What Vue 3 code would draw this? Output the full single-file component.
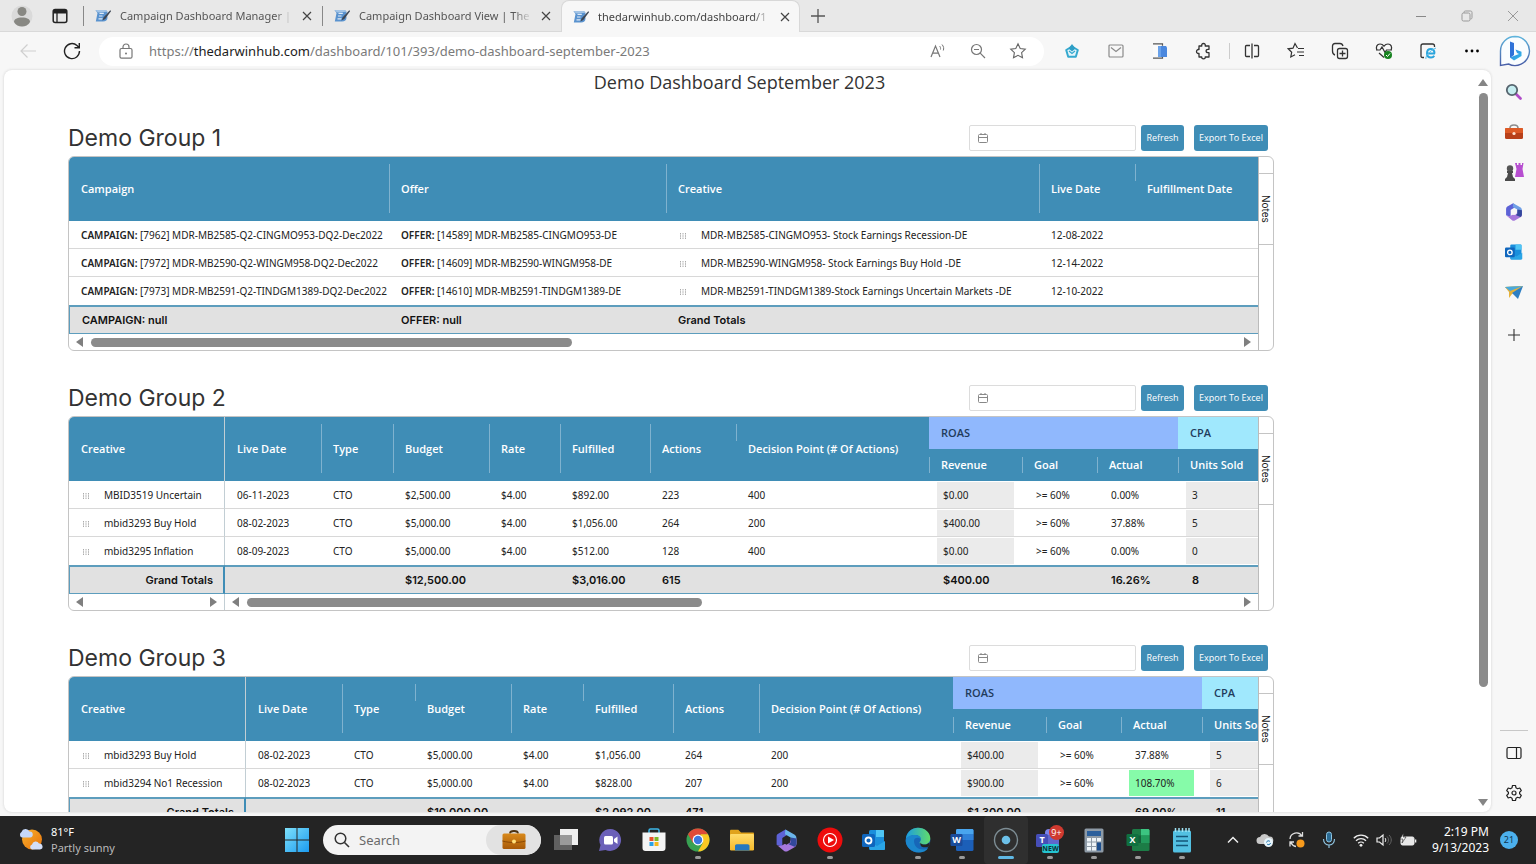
<script setup>
const tabs = [
  { title: 'Campaign Dashboard Manager |', active: false },
  { title: 'Campaign Dashboard View | The', active: false },
  { title: 'thedarwinhub.com/dashboard/1', active: true },
]

const text = (label, width, extra = {}) => ({ label, width, ...extra })

const metricLeaves = [
  text('Revenue', 93, { metric: true, shaded: true }),
  text('Goal', 75, { metric: true }),
  text('Actual', 81, { metric: true }),
  text('Units Sold', null, { metric: true, shaded: true }),
]

const groups = [
  {
    name: 'Demo Group 1',
    pinned: 0,
    thumb: 'thumb-a',
    columns: [
      text('Campaign', 320, { tag: 'CAMPAIGN:' }),
      text('Offer', 277, { tag: 'OFFER:' }),
      text('Creative', 373, { handle: true }),
      text('Live Date', 96),
      text('Fulfillment Date', null, { short: true }),
    ],
    leaves: [],
    rows: [
      ['[7962] MDR-MB2585-Q2-CINGMO953-DQ2-Dec2022', '[14589] MDR-MB2585-CINGMO953-DE', 'MDR-MB2585-CINGMO953- Stock Earnings Recession-DE', '12-08-2022', ''],
      ['[7972] MDR-MB2590-Q2-WINGM958-DQ2-Dec2022', '[14609] MDR-MB2590-WINGM958-DE', 'MDR-MB2590-WINGM958- Stock Earnings Buy Hold -DE', '12-14-2022', ''],
      ['[7973] MDR-MB2591-Q2-TINDGM1389-DQ2-Dec2022', '[14610] MDR-MB2591-TINDGM1389-DE', 'MDR-MB2591-TINDGM1389-Stock Earnings Uncertain Markets -DE', '12-10-2022', ''],
    ],
    totals: ['CAMPAIGN: null', 'OFFER: null', 'Grand Totals', '', ''],
  },
  {
    name: 'Demo Group 2',
    pinned: 156,
    thumb: 'thumb-b',
    columns: [
      text('Creative', 156, { handle: true, pin: true }),
      text('Live Date', 96),
      text('Type', 72),
      text('Budget', 96),
      text('Rate', 71),
      text('Fulfilled', 90),
      text('Actions', 86),
      text('Decision Point (# Of Actions)', 193, { short: true }),
    ],
    leaves: metricLeaves,
    rows: [
      ['MBID3519 Uncertain', '06-11-2023', 'CTO', '$2,500.00', '$4.00', '$892.00', '223', '400', '$0.00', '>= 60%', '0.00%', '3'],
      ['mbid3293 Buy Hold', '08-02-2023', 'CTO', '$5,000.00', '$4.00', '$1,056.00', '264', '200', '$400.00', '>= 60%', '37.88%', '5'],
      ['mbid3295 Inflation', '08-09-2023', 'CTO', '$5,000.00', '$4.00', '$512.00', '128', '400', '$0.00', '>= 60%', '0.00%', '0'],
    ],
    totals: ['Grand Totals', '', '', '$12,500.00', '', '$3,016.00', '615', '', '$400.00', '', '16.26%', '8'],
  },
  {
    name: 'Demo Group 3',
    pinned: 177,
    thumb: 'thumb-b',
    columns: [
      text('Creative', 177, { handle: true, pin: true }),
      text('Live Date', 96),
      text('Type', 73),
      text('Budget', 96, { short: true }),
      text('Rate', 72),
      text('Fulfilled', 90, { short: true }),
      text('Actions', 86),
      text('Decision Point (# Of Actions)', 194),
    ],
    leaves: metricLeaves,
    rows: [
      ['mbid3293 Buy Hold', '08-02-2023', 'CTO', '$5,000.00', '$4.00', '$1,056.00', '264', '200', '$400.00', '>= 60%', '37.88%', '5'],
      ['mbid3294 No1 Recession', '08-02-2023', 'CTO', '$5,000.00', '$4.00', '$828.00', '207', '200', '$900.00', '>= 60%', '108.70%', '6'],
    ],
    totals: ['Grand Totals', '', '', '$10,000.00', '', '$2,092.00', '471', '', '$1,300.00', '', '69.00%', '11'],
  },
]

const allColumns = (g) => [...g.columns, ...g.leaves]
const isHit = (value) => value === '108.70%'
</script>

<template>
  <div class="screen">
    <svg class="defs" width="0" height="0" aria-hidden="true">
      <defs>
        <linearGradient id="gBing" x1="0" y1="0" x2="1" y2="1"><stop offset="0" stop-color="#2f7fe0" /><stop offset="1" stop-color="#35c0e8" /></linearGradient>
        <linearGradient id="gRing" x1="0" y1="0" x2="0" y2="1"><stop offset="0" stop-color="#5fb4dc" /><stop offset="1" stop-color="#4a5fa8" /></linearGradient>
        <linearGradient id="gWin" x1="0" y1="0" x2="1" y2="1"><stop offset="0" stop-color="#7ee0fa" /><stop offset="1" stop-color="#1b9bf0" /></linearGradient>
        <linearGradient id="gSun" x1="0" y1="0" x2="1" y2="1"><stop offset="0" stop-color="#f7b02c" /><stop offset="1" stop-color="#e8720c" /></linearGradient>
        <linearGradient id="gCase" x1="0" y1="0" x2="0" y2="1"><stop offset="0" stop-color="#d98a1c" /><stop offset="1" stop-color="#a85a08" /></linearGradient>
        <linearGradient id="gEdge" x1="0" y1="0" x2="1" y2="0"><stop offset="0" stop-color="#1b9ce0" /><stop offset="1" stop-color="#62dc6a" /></linearGradient>
        <linearGradient id="gFold" x1="0" y1="0" x2="0" y2="1"><stop offset="0" stop-color="#ffdc6b" /><stop offset="1" stop-color="#f5b92a" /></linearGradient>
        <symbol id="fav" viewBox="0 0 16 16">
          <path d="M.5 2h9c2 0 3 1 3 2.500 0 1.200-.6 2-1.500 2.600 1 .5 1.500 1.300 1.500 2.400 0 2.500-1.700 4-4.500 4H.8L2.500 5z" fill="#5a93cf" /><path d="M.5 2h9c1.500 0 2.500.6 2.900 1.700L3 4.500z" fill="#a3c4e6" /><path d="M4.500 5.300h4.300M4 8h3.500M3.500 10.800h4" stroke="#dfeaf6" stroke-width="1.200" /><path d="M15.500 2l-7 7.500-1.200 3 3-1.500L15.800 3.500z" fill="#3d4654" />
        </symbol>
        <symbol id="m365" viewBox="0 0 24 24">
          <path d="M11 1.500L4 5.500c-1 .6-1.500 1.400-1.500 2.500v8l5.500 2V9.500l7-4.500z" fill="#5d62d6" /><path d="M11 1.500l8.500 4.700c1.300.8 2 1.800 2 3.300v6L16 14V9l-5.500-3z" fill="#6bb5ea" /><path d="M21.500 10v5.500c0 1.300-.7 2.200-1.800 2.900L13 22.300c-1 .4-2 .4-3 0L2.500 16c2 1.500 4 1.300 5.500.5l8-4.500z" fill="#a678dc" /><path d="M16 9l5.500 1v5c0 1.300-.7 2.400-1.800 3L14 15.500 16 14z" fill="#33489c" /><path d="M12 8l3.500 2v4L12 16l-3.500-2v-4z" fill="#242424" />
        </symbol>
        <symbol id="m365light" viewBox="0 0 24 24">
          <path d="M11 1.500L4 5.500c-1 .6-1.500 1.400-1.500 2.500v8l5.500 2V9.500l7-4.500z" fill="#5d62d6" /><path d="M11 1.500l8.500 4.700c1.300.8 2 1.800 2 3.300v6L16 14V9l-5.500-3z" fill="#6f9fe6" /><path d="M21.500 10v5.500c0 1.300-.7 2.200-1.800 2.900L13 22.300c-1 .4-2 .4-3 0L2.500 16c2 1.500 4 1.300 5.500.5l8-4.500z" fill="#a678dc" /><path d="M16 9l5.500 1v5c0 1.300-.7 2.400-1.800 3L14 15.500 16 14z" fill="#33489c" /><circle cx="12" cy="12" r="3.600" fill="#f7f7f7" />
        </symbol>
        <symbol id="outlook" viewBox="0 0 24 24">
          <rect x="7" y="2" width="15" height="20" rx="1.500" fill="#1a8fdc" /><path d="M14 2h7c.6 0 1 .4 1 1v6h-8z" fill="#4fc6f5" /><path d="M7 13l8 5 8-5v8c0 .6-.4 1-1 1H8z" fill="#2aa5e6" /><rect x="0" y="6" width="13" height="13" rx="1.500" fill="#0f66bd" /><circle cx="6.500" cy="12.500" r="3" fill="none" stroke="#fff" stroke-width="1.800" />
        </symbol>
      </defs>
    </svg>

    <header class="tabstrip">
      <button class="plain profile" aria-label="Profile">
        <svg width="22" height="22" viewBox="0 0 22 22"><circle cx="11" cy="11" r="10.500" fill="#dadada" /><circle cx="11" cy="6.500" r="4.500" fill="#888883" /><path d="M3 17c0-3 3-4.500 8-4.500s8 1.500 8 4.500c-1.500 3-5 4.500-8 4.500S4.500 20 3 17z" fill="#888883" /></svg>
      </button>
      <button class="plain workspaces" aria-label="Tab actions">
        <svg width="16" height="16" viewBox="0 0 16 16"><rect x="1.200" y="1.500" width="13.600" height="13" rx="2" fill="none" stroke="#222" stroke-width="1.500" /><path d="M1.500 2h13v3.500h-13z" fill="#222" /><path d="M5 5v9" stroke="#222" stroke-width="1.300" /></svg>
      </button>
      <nav class="tabs" aria-label="Tabs">
        <div v-for="t in tabs" :key="t.title" class="tab" :class="{ active: t.active }">
          <svg class="fav" width="16" height="16"><use href="#fav" /></svg>
          <a class="tab-title" href="#">{{ t.title }}</a>
          <button class="plain close" aria-label="Close tab"><svg width="10" height="10" viewBox="0 0 10 10"><path d="M1 1l8 8M9 1L1 9" stroke="#444" stroke-width="1.200" /></svg></button>
        </div>
      </nav>
      <button class="plain newtab" aria-label="New tab"><svg width="14" height="14" viewBox="0 0 14 14"><path d="M7 0v14M0 7h14" stroke="#555" stroke-width="1.300" /></svg></button>
      <div class="winctl">
        <button class="plain" aria-label="Minimize"><svg width="12" height="12" viewBox="0 0 12 12"><path d="M1 6.500h10" stroke="#888" /></svg></button>
        <button class="plain" aria-label="Restore"><svg width="12" height="12" viewBox="0 0 12 12"><rect x="1" y="3" width="8" height="8" rx="1.500" fill="none" stroke="#999" /><path d="M3 3V2.500C3 1.500 3.500 1 4.500 1h5C10.500 1 11 1.500 11 2.500v5c0 1-.5 1.500-1.500 1.500" fill="none" stroke="#999" /></svg></button>
        <button class="plain" aria-label="Close"><svg width="12" height="12" viewBox="0 0 12 12"><path d="M1 1l10 10M11 1L1 11" stroke="#999" /></svg></button>
      </div>
    </header>

    <div class="toolbar">
      <button class="plain slot" aria-label="Back"><svg width="18" height="18" viewBox="0 0 18 18"><path d="M17 9H2M8.500 2.500L2 9l6.500 6.500" fill="none" stroke="#cfcfcf" stroke-width="1.200" /></svg></button>
      <button class="plain slot" aria-label="Refresh page"><svg width="18" height="18" viewBox="0 0 18 18"><path d="M16.500 9A7.500 7.500 0 1 1 14 3.500L16 5.500M16.300 1v4.800h-4.800" fill="none" stroke="#222" stroke-width="1.400" /></svg></button>
      <div class="address">
        <svg width="14" height="16" viewBox="0 0 14 16"><rect x="1" y="5.500" width="12" height="9.700" rx="1.500" fill="none" stroke="#777" stroke-width="1.200" /><path d="M4 5.500V4a3 3 0 0 1 6 0v1.500" fill="none" stroke="#777" stroke-width="1.200" /><circle cx="7" cy="10.500" r="1" fill="#777" /></svg>
        <a class="url" href="#">https://<b>thedarwinhub.com</b>/dashboard/101/393/demo-dashboard-september-2023</a>
        <button class="plain act" aria-label="Read aloud"><svg width="16" height="16" viewBox="0 0 16 16"><path d="M1 14L5.500 3 10 14M2.700 10.200h5.600" fill="none" stroke="#777" stroke-width="1.200" /><path d="M9.500 3c1 1 1.200 2 1 3.500M12 1.500c1.800 2 2 4 1.300 6" fill="none" stroke="#777" /></svg></button>
        <button class="plain act" aria-label="Zoom out"><svg width="16" height="16" viewBox="0 0 16 16"><circle cx="6.500" cy="6.500" r="5" fill="none" stroke="#777" stroke-width="1.200" /><path d="M4 6.500h5M10.200 10.200L15 15" stroke="#777" stroke-width="1.200" /></svg></button>
        <button class="plain act" aria-label="Add to favorites"><svg width="18" height="18" viewBox="0 0 18 18"><path d="M9 1.800l2.200 4.700 5.100.7-3.700 3.500.9 5.100L9 13.300l-4.500 2.500.9-5.100L1.700 7.200l5.100-.7z" fill="none" stroke="#666" stroke-width="1.100" /></svg></button>
      </div>
      <div class="ext">
        <button class="plain slot" aria-label="Extension"><svg width="16" height="16" viewBox="0 0 16 16"><path d="M8 3.500l5.800 3.500-2 6.800H4.200l-2-6.800z" fill="#e6f5fa" stroke="#35a9cf" stroke-width="2" stroke-linejoin="round" /><path d="M4.500 5.500L8 1l3.500 4.500L8 8.500z" fill="#2f9fc6" /><path d="M5 8l3 2.500L11 8" fill="none" stroke="#35a9cf" stroke-width="1.300" /></svg></button>
        <button class="plain slot" aria-label="Mail"><svg width="16" height="16" viewBox="0 0 16 16"><rect x="1" y="2" width="14" height="12" rx="1" fill="none" stroke="#8a8a8a" stroke-width="1.200" /><path d="M3 4.500l5 4 5-4" fill="none" stroke="#8a8a8a" stroke-width="1.200" /></svg></button>
        <button class="plain slot" aria-label="Office"><svg width="16" height="16" viewBox="0 0 16 16"><path d="M1 .5h9v15H1z" fill="#fafafa" /><path d="M1 .8h9.500v2M1 15.200h9.500v-2" fill="none" stroke="#555" stroke-width="1.200" /><path d="M6 3h8l1 1.500V14H6z" fill="#4b88de" /><path d="M6 3h3v11H6z" fill="#6aa2ea" /></svg></button>
        <button class="plain slot" aria-label="Extensions"><svg width="18" height="18" viewBox="0 0 18 18"><path d="M4 4h2.800c-.4-1.500.4-2.500 1.700-2.500s2.100 1 1.700 2.500H14v3.300h-.9c-1.300 0-2 .7-2 1.700s.7 1.700 2 1.700h.9V15h-3.800c.4 1-.4 1.800-1.700 1.800S6.400 16 6.800 15H4v-3.600c-1.500.4-2.500-.6-2.500-1.900s1-2.300 2.500-1.900z" fill="none" stroke="#333" stroke-width="1.300" stroke-linejoin="round" /></svg></button>
        <span class="sep"></span>
        <button class="plain slot first" aria-label="Split screen"><svg width="16" height="16" viewBox="0 0 16 16"><path d="M6 2.500H2.500a1 1 0 0 0-1 1v9a1 1 0 0 0 1 1H6M10 2.500h3.500a1 1 0 0 1 1 1v9a1 1 0 0 1-1 1H10M8 0.500v15" fill="none" stroke="#333" stroke-width="1.300" /></svg></button>
        <button class="plain slot" aria-label="Favorites"><svg width="18" height="18" viewBox="0 0 18 18"><path d="M10.500 6L8 1.500 6 6.200l-4.800.6 3.500 3.400L3.800 15 8 12.800M11 6.500h6M10 10h7M12 13.500h5" fill="none" stroke="#333" stroke-width="1.200" /></svg></button>
        <button class="plain slot" aria-label="Collections"><svg width="18" height="18" viewBox="0 0 18 18"><rect x="6.500" y="6.500" width="10" height="10" rx="2" fill="none" stroke="#333" stroke-width="1.300" /><path d="M11.500 8.500v6M8.500 11.500h6M4 13C2 12.500 1.500 11 1.500 9V4c0-1.500 1-2.500 2.500-2.500h5c1.500 0 2.500.7 3 2.500" fill="none" stroke="#333" stroke-width="1.300" /></svg></button>
        <button class="plain slot" aria-label="Browser essentials"><svg width="18" height="18" viewBox="0 0 18 18"><path d="M2 8C.5 5 2 2 5 2c1.800 0 3 .8 4 2.200C10 2.800 11.200 2 13 2c3 0 4.500 3 3 6M4 11l5 4.500M1 8h4l2-3 3 5.500L11.500 8H17" fill="none" stroke="#333" stroke-width="1.200" /><circle cx="13" cy="13" r="4" fill="#17821f" /><path d="M11 13l1.500 1.500 2.500-3" fill="none" stroke="#fff" /></svg></button>
        <button class="plain slot" aria-label="Internet Explorer mode"><svg width="18" height="18" viewBox="0 0 18 18"><path d="M5 15.500H3.500c-1 0-1.500-.5-1.500-1.500V4c0-1.200.8-2 2-2h9.500c1.200 0 2 .8 2 2v1" fill="none" stroke="#333" stroke-width="1.300" /><path d="M16 11.500H8.500M15.500 11.500c0-3-1.500-4.500-3.700-4.500S8 8.700 8 11.300s1.500 4.200 4 4.200c1.500 0 2.500-.5 3.200-1.800" fill="none" stroke="#2aa4dc" stroke-width="2" /><path d="M7 17c-1-2 3-8 10-11" fill="none" stroke="#5bc0ea" /></svg></button>
        <button class="plain slot" aria-label="Settings and more"><svg width="16" height="16" viewBox="0 0 16 16"><circle cx="2.500" cy="8" r="1.400" /><circle cx="8" cy="8" r="1.400" /><circle cx="13.500" cy="8" r="1.400" /></svg></button>
        <button class="plain bing" aria-label="Bing chat"><svg width="32" height="32" viewBox="0 0 32 32"><path d="M16 1.500A14.500 14.500 0 1 1 9.500 29L1.500 30.500V16A14.500 14.500 0 0 1 16 1.500z" fill="#fafdff" stroke="url(#gRing)" stroke-width="1.400" /><path d="M11 6.500l4 1.500v12l-4 3z" fill="#2f72d8" /><path d="M11 22.500l4 3 7.500-4.500v-4.300l-6-2.200 1.500 3.500 2 1z" fill="url(#gBing)" /></svg></button>
      </div>
    </div>

    <div class="middle">
      <main class="page">
        <div class="content">
          <h1>Demo Dashboard September 2023</h1>
          <section v-for="g in groups" :key="g.name" class="group">
            <div class="group-head">
              <h2>{{ g.name }}</h2>
              <div class="date">
                <svg width="10" height="10" viewBox="0 0 10 10"><rect x="0.500" y="1.500" width="9" height="8" rx="1" fill="none" stroke="#888" /><path d="M.5 4.500h9M3 0v2M7 0v2" stroke="#888" /></svg>
                <input type="text" :aria-label="g.name + ' date range'" />
              </div>
              <button class="btn">Refresh</button>
              <button class="btn export">Export To Excel</button>
            </div>
            <div class="grid">
              <div class="grid-main">
                <table>
                  <colgroup>
                    <col v-for="c in allColumns(g)" :key="c.label" :style="c.width ? { width: c.width + 'px' } : {}" />
                  </colgroup>
                  <thead>
                    <tr :class="g.leaves.length ? 'half' : 'full'">
                      <th v-for="(c, i) in g.columns" :key="c.label" :rowspan="g.leaves.length ? 2 : 1" :class="{ short: c.short, pin: c.pin, line: i > 0 && !(g.pinned && i === 1) }">{{ c.label }}</th>
                      <template v-if="g.leaves.length">
                        <th colspan="3" class="roas">ROAS</th>
                        <th class="cpa">CPA</th>
                      </template>
                    </tr>
                    <tr v-if="g.leaves.length" class="half">
                      <th v-for="c in g.leaves" :key="c.label" class="leaf line">{{ c.label }}</th>
                    </tr>
                  </thead>
                  <tbody>
                    <tr v-for="(r, ri) in g.rows" :key="ri">
                      <td v-for="(c, i) in allColumns(g)" :key="c.label" :class="{ pin: c.pin, metric: c.metric }">
                        <span v-if="c.metric" class="box" :class="{ shaded: c.shaded, hit: isHit(r[i]) }">{{ r[i] }}</span>
                        <template v-else>
                          <svg v-if="c.handle" class="handle" width="8" height="6" viewBox="0 0 8 6"><path d="M1.500 0v6M4 0v6M6.500 0v6" stroke="#aaa" stroke-dasharray="1.500 .75" /></svg>
                          <b v-if="c.tag">{{ c.tag }}&nbsp;</b>{{ r[i] }}
                        </template>
                      </td>
                    </tr>
                  </tbody>
                  <tfoot>
                    <tr>
                      <td v-for="(c, i) in allColumns(g)" :key="c.label" :class="{ pin: c.pin, metric: c.metric }">{{ g.totals[i] }}</td>
                    </tr>
                  </tfoot>
                </table>
                <div class="hbars">
                  <div v-if="g.pinned" class="hbar pinned" :style="{ width: g.pinned + 'px' }"><i class="tri left"></i><i class="tri right"></i></div>
                  <div class="hbar"><i class="tri left"></i><span class="track"><span class="thumb" :class="g.thumb"></span></span><i class="tri right"></i></div>
                </div>
              </div>
              <aside class="side"><button class="plain notes">Notes</button></aside>
            </div>
          </section>
        </div>
        <div class="vbar"><i class="tri up"></i><span class="vtrack"><span class="vthumb"></span></span><i class="tri down"></i></div>
      </main>

      <aside class="edgebar">
        <button class="plain" aria-label="Search"><svg width="18" height="18" viewBox="0 0 18 18"><path d="M10.500 10.500l5 5" stroke="#b04cc8" stroke-width="2.800" stroke-linecap="round" /><circle cx="7" cy="7" r="5.200" fill="#c5edf0" stroke="#56646e" stroke-width="1.800" /></svg></button>
        <button class="plain" aria-label="Shopping tools"><svg width="20" height="20" viewBox="0 0 20 20"><path d="M6 6c0-2 1-3 4-3s4 1 4 3" fill="none" stroke="#8c8c8c" stroke-width="1.600" /><rect x="1" y="6" width="18" height="11" rx="1.500" fill="#b8401a" /><path d="M1 11h18v-4a1 1 0 0 0-1-1H2a1 1 0 0 0-1 1z" fill="#dd5a26" /><circle cx="10" cy="11.500" r="1.600" fill="#ffe3d0" /></svg></button>
        <button class="plain" aria-label="Games"><svg width="20" height="20" viewBox="0 0 20 20"><path d="M11 1h2v2h1.500V1h2v2H18V1h1.500l-1 6 1.500 8h-9l1.500-8z" fill="#b74ed0" /><circle cx="6" cy="6.500" r="3.200" fill="#555" /><path d="M3 9h6v2H8l1 4 2 2v2H1v-2l2-2 1-4H3z" fill="#4a4a4a" /></svg></button>
        <button class="plain" aria-label="Microsoft 365"><svg width="20" height="20"><use href="#m365light" /></svg></button>
        <button class="plain" aria-label="Outlook"><svg width="18" height="18"><use href="#outlook" /></svg></button>
        <button class="plain" aria-label="Drop"><svg width="20" height="20" viewBox="0 0 20 20"><path d="M1 5l18-1-10 7z" fill="#4aa9dc" /><path d="M1 5l4 5v6l3-4 11-8z" fill="#e6b23a" /><path d="M1 5l18-1L6 9z" fill="#4aa9dc" /><path d="M19 4L8 11l6 6z" fill="#2d7fc4" /></svg></button>
        <button class="plain add" aria-label="Customize"><svg width="12" height="12" viewBox="0 0 12 12"><path d="M6 0v12M0 6h12" stroke="#333" stroke-width="1.100" /></svg></button>
        <span class="grow"></span>
        <span class="rule"></span>
        <button class="plain" aria-label="Hide sidebar"><svg width="16" height="14" viewBox="0 0 16 14"><rect x="1" y="1.500" width="14" height="11" rx="1.500" fill="none" stroke="#222" stroke-width="1.200" /><path d="M10.500 1.500v11" stroke="#222" stroke-width="1.200" /></svg></button>
        <button class="plain" aria-label="Settings"><svg width="18" height="18" viewBox="0 0 18 18"><path d="M7.500 1.500h3l.5 2.300 1.500.9 2.300-.7 1.500 2.600-1.700 1.600v1.600l1.700 1.600-1.500 2.600-2.300-.7-1.500.9-.5 2.300h-3L7 14.200l-1.500-.9-2.300.7-1.500-2.600 1.700-1.600V8.200L1.700 6.600 3.200 4l2.300.7L7 3.800z" fill="none" stroke="#222" stroke-width="1.200" stroke-linejoin="round" /><circle cx="9" cy="9" r="2" fill="none" stroke="#222" stroke-width="1.200" /></svg></button>
      </aside>
    </div>

    <footer class="taskbar">
      <button class="plain weather">
        <svg width="24" height="24" viewBox="0 0 24 24"><circle cx="13" cy="11.500" r="10" fill="url(#gSun)" /><path d="M3 9.500a3 3 0 0 1-.5-5.500 4.300 4.300 0 0 1 8-.5 3 3 0 0 1 .5 6z" fill="#c6d8f8" /><path d="M13 21.500a2.600 2.600 0 0 1 0-5 3.800 3.800 0 0 1 7-1 3 3 0 0 1 1 6z" fill="#d3def8" /></svg>
        <span><b>81°F</b><em>Partly sunny</em></span>
      </button>
      <button class="plain start" aria-label="Start"><svg width="24" height="24" viewBox="0 0 24 24"><path d="M0 0h11.500v11.500H0zM12.500 0H24v11.500H12.500zM0 12.500h11.500V24H0zM12.500 12.500H24V24H12.500z" fill="url(#gWin)" /></svg></button>
      <label class="search">
        <svg width="16" height="16" viewBox="0 0 16 16"><circle cx="6.500" cy="6.500" r="5.300" fill="none" stroke="#333" stroke-width="1.500" /><path d="M10.500 10.500L15 15" stroke="#333" stroke-width="1.600" /></svg>
        <input type="text" placeholder="Search" aria-label="Search" />
        <span class="pill"><svg width="24" height="20" viewBox="0 0 24 20"><path d="M8 3.500C8 1.500 9 1 12 1s4 .5 4 2.500" fill="none" stroke="#4d3210" stroke-width="1.800" /><rect x="0.500" y="3.500" width="23" height="15.500" rx="1.500" fill="url(#gCase)" /><path d="M.5 11c7 2 16 2 23 0" fill="none" stroke="#8a4a06" /><circle cx="12" cy="11.500" r="2" fill="#ffe07a" /></svg></span>
      </label>
      <div class="apps">
        <button class="plain app" aria-label="Task view"><svg width="26" height="24" viewBox="0 0 26 24"><rect x="7" y="1" width="18" height="16" fill="#efefef" /><rect x="1" y="7" width="18" height="15" fill="#6c6c6c" fill-opacity=".85" /><rect x="7" y="7" width="12" height="10" fill="#9a9a9a" /></svg></button>
        <button class="plain app" aria-label="Chat"><svg width="24" height="24" viewBox="0 0 24 24"><path d="M12.500 1a11 11 0 1 1-5 21L1 23l1.500-6A11 11 0 0 1 12.500 1z" fill="#6b60b8" /><rect x="6" y="8" width="9" height="8.500" rx="1.500" fill="#fff" /><path d="M16 11l3.500-2.500v7.500L16 13.500z" fill="#fff" /></svg></button>
        <button class="plain app" aria-label="Store"><svg width="24" height="24" viewBox="0 0 24 24"><path d="M7 5V2.500C7 1.500 7.500 1 8.500 1h7c1 0 1.500.5 1.500 1.500V5" fill="none" stroke="#3cb6e8" stroke-width="1.500" /><path d="M0.500 4.500h23V20a3 3 0 0 1-3 3h-17a3 3 0 0 1-3-3z" fill="#f4f4f4" /><path d="M7.500 9h4v4h-4z" fill="#e8512b" /><path d="M12.500 9h4v4h-4z" fill="#7cb928" /><path d="M7.500 14h4v4h-4z" fill="#2aa2e6" /><path d="M12.500 14h4v4h-4z" fill="#f6b81c" /></svg></button>
        <button class="plain app run" aria-label="Chrome"><svg width="24" height="24" viewBox="0 0 24 24"><circle cx="12" cy="12" r="11.500" fill="#38a152" /><path d="M2 6.300a11.500 11.500 0 0 1 20 0L12 7l-5 8z" fill="#de4a38" /><path d="M22 6.300A11.500 11.500 0 0 1 12 23.500L17 14.500 14.500 6.300z" fill="#fbc824" /><circle cx="12" cy="12" r="5.400" fill="#fff" /><circle cx="12" cy="12" r="4.200" fill="#3b78e0" /></svg></button>
        <button class="plain app" aria-label="File Explorer"><svg width="26" height="24" viewBox="0 0 26 24"><path d="M1 3c0-.8.500-1.300 1.300-1.300h7L12 4.500h12c.6 0 1 .5 1 1V12H1z" fill="#e0a31c" /><rect x="1" y="6" width="24" height="16.500" rx="1.200" fill="url(#gFold)" /><path d="M6 22.500V18c0-1 .7-1.700 1.700-1.700h11c1 0 1.800.7 1.800 1.700v4.500z" fill="#2478c0" /></svg></button>
        <button class="plain app" aria-label="Microsoft 365"><svg width="25" height="25"><use href="#m365" /></svg></button>
        <button class="plain app run" aria-label="YouTube Music"><svg width="26" height="26" viewBox="0 0 26 26"><circle cx="13" cy="13" r="12.500" fill="#ee0c0c" /><circle cx="13" cy="13" r="6.500" fill="none" stroke="#fff" stroke-width="1.200" /><path d="M11 9.500l6 3.500-6 3.500z" fill="#fff" /></svg></button>
        <button class="plain app" aria-label="Outlook"><svg width="24" height="24"><use href="#outlook" /></svg></button>
        <button class="plain app run" aria-label="Edge"><svg width="26" height="26" viewBox="0 0 26 26"><circle cx="13" cy="13" r="12.300" fill="#1767b8" /><path d="M.9 12C1.500 5 7 .7 13 .7c7 0 12.300 5 12.300 10.500 0 4-3 6.300-6.500 6.300-3 0-4.300-1-4.300-2 0-.7 1.300-1.300 1.300-3.300C15.800 10 13.500 8 10 8 5 8 2 11 .9 12z" fill="url(#gEdge)" /><path d="M9 14c0 5 4 8.500 9 8.500 2 0 3.700-.6 5.300-1.500-2 3-5.500 4.500-9.500 4.500C7 25.500.7 20 .7 14 .7 10 5 8 10 8c3.500 0 5.800 2 5.800 4.200C14 10 9 10 9 14z" fill="#1b86cc" /><path d="M15.500 15.500c.5 1.500 2 2 3.800 2 2.200 0 4-.8 5-2.300.5 1.500.4 3-.6 4.300-5 2-9.200.5-8.200-4z" fill="#242424" /></svg></button>
        <button class="plain app run" aria-label="Word"><svg width="24" height="24" viewBox="0 0 24 24"><rect x="6" y="1" width="17.500" height="22" rx="1.500" fill="#1c5fb8" /><path d="M6 6.500V2.500C6 1.600 6.600 1 7.500 1H22c.9 0 1.500.6 1.500 1.500v4z" fill="#49a5ee" /><path d="M6 6.500h17.500V12H6z" fill="#2f80d8" /><rect x="0.500" y="6" width="12" height="12" rx="1.200" fill="#1a4c9c" /><text x="6.500" y="15.300" class="glyph">W</text></svg></button>
        <button class="plain app run current" aria-label="Recorder"><svg width="26" height="26" viewBox="0 0 26 26"><circle cx="13" cy="13" r="11.500" fill="none" stroke="#7d8d94" stroke-width="1.400" /><circle cx="13" cy="13" r="4.300" fill="#6cc0e8" /></svg></button>
        <button class="plain app run" aria-label="Teams"><svg width="30" height="30" viewBox="0 0 30 30"><circle cx="14" cy="8" r="4" fill="#7b83eb" /><rect x="8" y="10" width="16" height="13" rx="3" fill="#6067cc" /><rect x="1" y="9" width="12" height="13" rx="1.500" fill="#464eb8" /><text x="7" y="18" class="glyph">T</text><circle cx="21.500" cy="7.500" r="7.500" fill="#d03a30" /><text x="21.500" y="11" class="glyph badge">9+</text><rect x="7" y="19" width="17" height="9" rx="2" fill="#25c4d0" /><text x="15.500" y="26" class="glyph new">NEW</text></svg></button>
        <button class="plain app run" aria-label="Calculator"><svg width="20" height="25" viewBox="0 0 20 25"><rect x="0.500" y="0.500" width="19" height="24" rx="1.500" fill="#8d9aa6" /><rect x="3" y="3" width="14" height="5" fill="#2a5f9c" /><path d="M3 10h4v3.500H3zM8 10h4v3.500H8zM13 10h4v3.500h-4zM3 14.500h4V18H3zM8 14.500h4V18H8zM3 19h4v3.500H3zM8 19h4v3.500H8z" fill="#eef4f8" /><path d="M13 14.500h4v8h-4z" fill="#1d4f8e" /></svg></button>
        <button class="plain app run" aria-label="Excel"><svg width="24" height="24" viewBox="0 0 24 24"><rect x="6" y="1" width="17.500" height="22" rx="1.500" fill="#1c7c46" /><path d="M15 1h7c.9 0 1.500.6 1.500 1.500v5H15z" fill="#3cc481" /><path d="M6 7.500h9V15H6z" fill="#15603a" /><path d="M15 7.500h8.500V15H15z" fill="#229a5c" /><rect x="0.500" y="6" width="12" height="12" rx="1.200" fill="#107040" /><text x="6.500" y="15.300" class="glyph">X</text></svg></button>
        <button class="plain app run" aria-label="Notepad"><svg width="20" height="25" viewBox="0 0 20 25"><rect x="1" y="2.500" width="18" height="22" rx="1.500" fill="#53c0e2" /><path d="M3.500 0v4M7 0v4M10.500 0v4M14 0v4M17 0v4" stroke="#9fe2f4" stroke-width="1.500" /><path d="M4 8.500h12M4 13h12M4 17.500h12" stroke="#14567a" stroke-width="1.500" /></svg></button>
      </div>
      <div class="tray">
        <button class="plain t" aria-label="Show hidden icons"><svg width="12" height="12" viewBox="0 0 12 12"><path d="M1 8.500l5-5 5 5" fill="none" stroke="#eee" stroke-width="1.500" /></svg></button>
        <button class="plain t" aria-label="OneDrive"><svg width="18" height="16" viewBox="0 0 18 16"><path d="M4 12a3.500 3.500 0 0 1 0-7 5 5 0 0 1 9-.5A3.700 3.700 0 0 1 14 12z" fill="#c9c9c9" /><circle cx="12.500" cy="10.500" r="4.500" fill="#e8f5fb" /><path d="M10.500 10.500a2 2 0 0 1 3.500-1M14.500 11a2 2 0 0 1-3.500 1" fill="none" stroke="#2878b0" /></svg></button>
        <button class="plain t" aria-label="Updates"><svg width="18" height="18" viewBox="0 0 18 18"><path d="M2 8a6.500 6.500 0 0 1 12-3M14.500 1v4h-4M8 15.500a6.500 6.500 0 0 1-5-4M2 15.500V11h4" fill="none" stroke="#e0e0e0" stroke-width="1.300" /><circle cx="12.500" cy="12.500" r="4" fill="#f79a1c" /></svg></button>
        <button class="plain t" aria-label="Microphone"><svg width="14" height="18" viewBox="0 0 14 18"><rect x="4.500" y="1" width="5" height="10" rx="2.500" fill="#2a6b94" stroke="#8fc4e0" /><path d="M1.500 8c0 8 11 8 11 0M7 14v3" fill="none" stroke="#8fc4e0" stroke-width="1.200" /></svg></button>
        <button class="plain net" aria-label="Network, volume and battery">
          <svg width="16" height="14" viewBox="0 0 16 14"><path d="M.8 5.200a10.200 10.200 0 0 1 14.400 0M3 7.800a7 7 0 0 1 10 0M5.200 10.200a4 4 0 0 1 5.600 0" fill="none" stroke="#eee" stroke-width="1.300" /><circle cx="8" cy="12.300" r="1.400" fill="#eee" /></svg>
          <svg width="16" height="14" viewBox="0 0 16 14"><path d="M1 5h2.500L7 2v10L3.500 9H1z" fill="none" stroke="#eee" stroke-width="1.200" /><path d="M9 5c1 1 1 3 0 4" fill="none" stroke="#eee" /><path d="M11 3.500c2 2 2 5 0 7M13 2c3 3 3 7 0 10" fill="none" stroke="#666" /></svg>
          <svg width="18" height="14" viewBox="0 0 18 14"><rect x="2" y="4" width="13" height="8" rx="1.500" fill="#e8e8e8" stroke="#eee" /><path d="M16 6.500h1.300v3H16z" fill="#eee" /><path d="M4.500 0L1 6h3l-1 4 4-6H4z" fill="#fff" stroke="#242424" stroke-width=".6" /></svg>
        </button>
        <button class="plain clock"><span>2:19 PM</span><span>9/13/2023</span></button>
        <span class="count">21</span>
      </div>
    </footer>
  </div>
</template>

<style>
html, body { margin: 0; overflow: hidden; background: #f7f7f7; }
</style>

<style scoped>
.screen { height: 100vh; display: flex; flex-direction: column; background: #f7f7f7; font-family: "Noto Sans", "Open Sans", sans-serif; color: #333; overflow: hidden; }
.defs { position: absolute; }
svg { display: block; flex: none; }
.plain { border: 0; padding: 0; margin: 0; background: none; font: inherit; color: inherit; display: flex; align-items: center; justify-content: center; flex: none; }
a { color: inherit; text-decoration: none; }

.tabstrip { height: 32px; flex: none; display: flex; align-items: center; background: #e8e8e8; box-shadow: inset 0 -1px #d9d9d9; }
.profile { width: 22px; margin-left: 11px; }
.workspaces { width: 16px; margin-left: 19px; margin-right: 15px; }
.tabs { display: flex; align-self: stretch; align-items: stretch; }
.tab { width: 239px; display: flex; align-items: center; padding: 0 8px 0 12px; box-sizing: border-box; position: relative; font-size: 11px; color: #555; }
.tab::before { content: ""; position: absolute; left: 0; top: 6px; height: 20px; border-left: 1px solid #888; }
.tab.active { background: #f7f7f7; border-radius: 8px 8px 0 0; border: 1px solid #d8d8d8; border-bottom: 0; color: #444; padding: 0 7px 0 11px; }
.tab.active::before { display: none; }
.tab-title { flex: 1; margin-left: 9px; margin-right: 4px; overflow: hidden; white-space: nowrap; mask-image: linear-gradient(90deg, #000 88%, rgb(0 0 0 / 0.2) 96%); line-height: 20px; }
.close { width: 14px; }
.newtab { width: 14px; margin-left: 11px; }
.winctl { margin-left: auto; display: flex; gap: 34px; padding-right: 17px; }

.toolbar { height: 38px; flex: none; display: flex; align-items: center; padding-left: 6px; }
.slot { width: 44px; height: 30px; }
.address { flex: 1; height: 29px; margin-left: 5px; border-radius: 15px; background: #fff; display: flex; align-items: center; padding-left: 20px; padding-right: 6px; }
.url { flex: 1; margin-left: 16px; font-size: 13px; line-height: 20px; color: #7a7a7a; white-space: nowrap; overflow: hidden; }
.url b { font-weight: 400; color: #1c1c1c; }
.act { width: 40px; }
.ext { display: flex; align-items: center; margin-left: 6px; }
.sep { height: 16px; border-left: 1px solid #ccc; margin-left: 3px; }
.bing { width: 32px; height: 32px; margin-left: 5px; margin-right: 5px; }

.middle { flex: 1; min-height: 0; display: flex; }
.page { flex: 1; min-width: 0; margin: 0 1px 4px 4px; display: flex; background: #fff; border-radius: 8px; overflow: hidden; box-shadow: 0 0 3px #d0d0d0; }
.content { flex: 1; min-width: 0; overflow: hidden; }
h1 { margin: 0; text-align: center; font-family: "Open Sans", sans-serif; font-size: 18px; line-height: 24px; font-weight: 400; color: #333; }
.group { margin: 27px 201px 0 64px; }
.group + .group { margin-top: 30px; }
.group-head { display: flex; align-items: center; height: 35px; box-sizing: border-box; padding-right: 6px; padding-bottom: 2px; }
h2 { margin: 0; flex: 1; font-family: Inter, sans-serif; font-weight: 400; font-size: 23px; line-height: 26px; color: #333; }
.date { position: relative; width: 167px; height: 26px; margin-right: 5px; }
.date svg { position: absolute; left: 9px; top: 8px; }
.date input { box-sizing: border-box; width: 100%; height: 100%; border: 1px solid #dcdcdc; border-radius: 2px; background: transparent; padding: 0 8px 0 26px; font: 10px "Noto Sans", sans-serif; }
.btn { height: 26px; width: 43px; border: 0; border-radius: 3px; background: #3f8db6; color: #fff; font: 9px "Open Sans", sans-serif; padding: 0; white-space: nowrap; }
.export { width: 74px; margin-left: 10px; }

.grid { display: flex; border: 1px solid #c4c4c4; border-radius: 6px; overflow: hidden; background: #fff; }
.grid-main { flex: 1; min-width: 0; overflow: hidden; }
table { width: 100%; table-layout: fixed; border-collapse: separate; border-spacing: 0; font-family: "Noto Sans", sans-serif; font-size: 10px; color: #222; }
th, td { padding: 0 0 0 12px; text-align: left; white-space: nowrap; box-sizing: border-box; }
th { position: relative; background: #3f8db6; color: #fff; font: 600 11px "Open Sans", sans-serif; padding-bottom: 2px; }
tr.full { height: 64px; }
tr.half { height: 32px; }
.line::before { content: ""; position: absolute; left: 0; top: 7px; bottom: 8px; border-left: 1px solid #7fb2cf; }
.short.line::before { bottom: auto; height: 17px; }
.leaf.line::before { top: 8px; bottom: 8px; }
.roas { background: #90b8fd; color: #1f3c5c; }
.cpa { background: #a0e8fd; color: #1f3c5c; }
th.pin, tbody .pin { border-right: 1px solid #c2ced4; }
tbody td { height: 28px; border-bottom: 1px solid #d8d8d8; line-height: 14px; }
tbody tr:last-child td { border-bottom: 0; }
tbody b { font-weight: 600; }
tbody .metric { padding: 0; overflow: hidden; }
.box { display: block; margin: 0 8px; padding-left: 6px; height: 26px; line-height: 26px; }
tr > td:last-child .box { margin-right: 0; }
.shaded { background: #ebebeb; }
.hit { background: #86fba9; }
.handle { display: inline-block; margin: 0 14px 0 1px; vertical-align: 0; }
tfoot td { height: 29px; border-top: 2px solid #5d9dbd; border-bottom: 1px solid #5d9dbd; background: #e1e1e1; font-family: Inter, sans-serif; font-weight: 600; font-size: 11px; color: #111; }
tfoot td:first-child { border-left: 1px solid #5d9dbd; }
tfoot .pin { text-align: right; padding-right: 10px; border-right: 2px solid #3f8db6; }
tfoot .metric { padding-left: 14px; }
.hbars { display: flex; height: 16px; }
.hbar { flex: 1; display: flex; align-items: center; padding: 0 7px; box-sizing: border-box; }
.hbar.pinned { flex: none; justify-content: space-between; border-right: 1px solid #c2ced4; }
.track { flex: 1; margin: 0 8px; }
.thumb { display: block; height: 9px; border-radius: 5px; background: #8b8b8b; }
.thumb-a { width: 42%; }
.thumb-b { width: 46%; }
.tri { width: 0; height: 0; border: 5px solid transparent; flex: none; }
.left { border-right: 7px solid #7f7f7f; border-left: 0; }
.right { border-left: 7px solid #7f7f7f; border-right: 0; }
.up { border-bottom: 7px solid #858585; border-top: 0; }
.down { border-top: 7px solid #858585; border-bottom: 0; }
.side { width: 15px; flex: none; border-left: 1px solid #bbb; padding-top: 16px; box-sizing: border-box; }
.notes { width: 100%; height: 72px; border-top: 1px solid #c4c4c4; border-bottom: 1px solid #c4c4c4; writing-mode: vertical-rl; font: 10px Inter, sans-serif; color: #222; }

.vbar { width: 16px; flex: none; display: flex; flex-direction: column; align-items: center; padding: 9px 0 6px; box-sizing: border-box; }
.vtrack { flex: 1; width: 9px; padding: 7px 0; }
.vthumb { display: block; height: 85%; border-radius: 5px; background: #8b8b8b; }

.edgebar { width: 44px; flex: none; display: flex; flex-direction: column; align-items: center; padding: 2px 0 3px; box-sizing: border-box; }
.edgebar .plain { width: 40px; height: 40px; }
.edgebar .add { height: 46px; }
.grow { flex: 1; }
.rule { width: 28px; border-top: 1px solid #c8c8c8; margin-bottom: 2px; }

.taskbar { height: 48px; flex: none; background: #242424; display: flex; align-items: center; color: #eee; }
.weather { width: 260px; justify-content: flex-start; padding-left: 19px; gap: 8px; text-align: left; margin-right: 25px; box-sizing: border-box; }
.weather span { display: flex; flex-direction: column; font-size: 11px; line-height: 16px; }
.weather b { font-weight: 400; color: #fff; }
.weather em { font-style: normal; color: #bbb; }
.start { width: 24px; }
.search { width: 218px; height: 30px; margin-left: 14px; border-radius: 15px; background: #f3f3f3; display: flex; align-items: center; padding-left: 11px; box-sizing: border-box; overflow: hidden; }
.search input { flex: 1; min-width: 0; border: 0; background: none; margin-left: 9px; padding: 0; font: 13px "Noto Sans", sans-serif; color: #666; outline: 0; }
.search input::placeholder { color: #6a6a6a; opacity: 1; }
.pill { width: 55px; height: 30px; border-radius: 15px; background: #e2e2e2; display: flex; align-items: center; justify-content: center; }
.apps { display: flex; margin-left: 3px; }
.app { width: 44px; height: 48px; position: relative; }
.run::after { content: ""; position: absolute; bottom: 5px; left: 19px; width: 6px; height: 3px; border-radius: 2px; background: #9a9a9a; }
.current { background: #2f2f2f; border-radius: 4px; }
.current::after { left: 14px; width: 16px; background: #5fb8e4; }
.glyph { font: 700 9px "Open Sans", sans-serif; fill: #fff; text-anchor: middle; }
.new { font-size: 7px; fill: #0c3038; }
.badge { font-weight: 400; }
.tray { margin-left: auto; display: flex; align-items: center; }
.t { width: 32px; height: 40px; }
.net { gap: 7px; margin-left: 8px; }
.clock { flex-direction: column; align-items: flex-end; font-size: 12px; line-height: 16px; color: #fff; width: 72px; }
.count { width: 18px; height: 18px; border-radius: 9px; background: #4cb0ec; color: #10344c; font-size: 9px; line-height: 18px; text-align: center; margin: 0 18px 0 11px; }
</style>
